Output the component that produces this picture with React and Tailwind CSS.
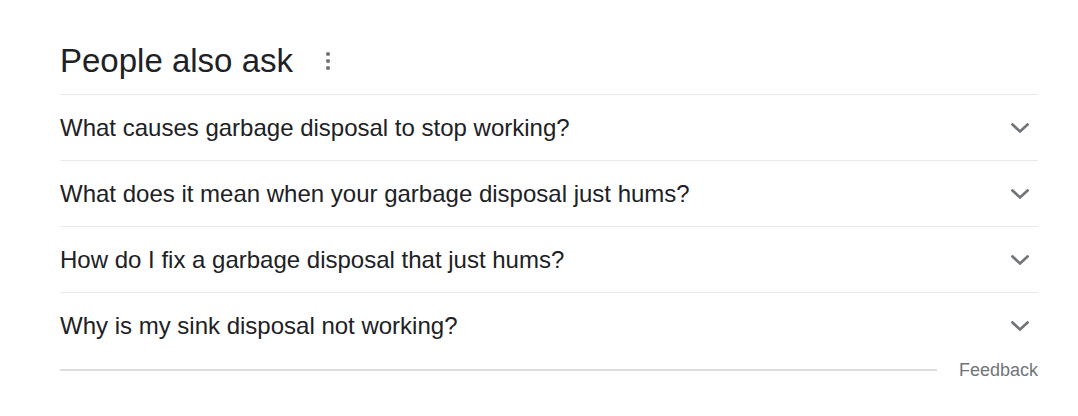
const questions = [
  'What causes garbage disposal to stop working?',
  'What does it mean when your garbage disposal just hums?',
  'How do I fix a garbage disposal that just hums?',
  'Why is my sink disposal not working?',
];

function Dots() {
  return (
    <svg width="6" height="20" viewBox="0 0 6 20" className="fill-[#70757a]">
      <circle cx="3" cy="3" r="2.1" />
      <circle cx="3" cy="10" r="2.1" />
      <circle cx="3" cy="17" r="2.1" />
    </svg>
  );
}

function Chevron() {
  return (
    <svg width="18" height="10" viewBox="0 0 18 10" fill="none" className="stroke-[#70757a]">
      <path d="M1.5 1.5 9 8.5l7.5-7" strokeWidth="2.6" strokeLinecap="square" />
    </svg>
  );
}

export default function App() {
  return (
    <div className="w-[1078px] h-[416px] bg-white font-['Liberation_Sans',Arial,sans-serif] text-[#202124]">
      <div className="ml-[60px] w-[978px]">
        {/* header */}
        <div className="h-[94px] pt-[41px] flex items-start">
          <h2 className="text-[33px] leading-[40px]">People also ask</h2>
          <div className="ml-[32px] mt-[10px]">
            <Dots />
          </div>
        </div>

        {/* questions */}
        <div>
          {questions.map((q) => (
            <div
              key={q}
              className="h-[66px] border-t border-[#e8eaed] flex items-center justify-between"
            >
              <span className="text-[24px] leading-[30px]">{q}</span>
              <div className="mr-[9px]">
                <Chevron />
              </div>
            </div>
          ))}
        </div>

        {/* feedback */}
        <div className="flex items-center h-[24px]">
          <div className="flex-1 h-[2px] bg-[#dadce0]" />
          <span className="ml-[22px] text-[18px] leading-[24px] text-[#70757a]">Feedback</span>
        </div>
      </div>
    </div>
  );
}
